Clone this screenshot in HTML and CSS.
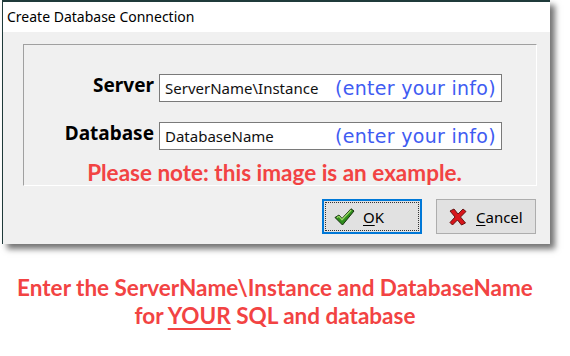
FILE: index.html
```html
<!DOCTYPE html>
<html>
<head>
<meta charset="utf-8">
<link rel="stylesheet" href="styles.css">
</head>
<body>
<div class="window">
  <div class="titlebar">Create Database Connection</div>
  <div class="client">
    <div class="group">
      <div class="form">
        <label class="label">Server</label>
        <div class="input"><span class="val">ServerName\Instance</span><span class="hint">(enter your info)</span></div>
        <label class="label">Database</label>
        <div class="input"><span class="val">DatabaseName</span><span class="hint">(enter your info)</span></div>
      </div>
      <div class="note">Please note: this image is an example.</div>
    </div>
    <div class="buttons">
      <button class="btn btn-default"><span class="focus">
        <svg class="ico" width="21" height="18" viewBox="0 0 21 18"><path d="M1 9.5 L5 7 L8 10.5 L17 0.8 L20 3 L8.5 17 Z" fill="#2e8c1c" stroke="#16300e" stroke-width="1"/><path d="M2.8 9.6 L5 8.3 L8 11.8 L17.2 2" fill="none" stroke="#9ad766" stroke-width="1.3"/></svg>
        <span class="cap"><u>O</u>K</span></span></button>
      <button class="btn"><span class="nofocus">
        <svg class="ico" width="20" height="18" viewBox="0 0 20 18"><path d="M2 3 L6 1 L10 6 L15 1 L18 3.5 L12.5 9 L17.5 15 L13.5 17 L9.5 12 L4.5 17 L2 14.5 L7 9 Z" fill="#d8141a" stroke="#5a0a0a" stroke-width="0.9"/></svg>
        <span class="cap"><u>C</u>ancel</span></span></button>
    </div>
  </div>
</div>
<div class="caption">
  <p class="line">Enter the ServerName\Instance and DatabaseName</p>
  <p class="line">for <span class="ul">YOUR</span> SQL and database</p>
</div>
</body>
</html>
```

FILE: styles.css
```css
html, body {
  margin: 0;
  padding: 0;
  background: #ffffff;
}
body {
  width: 570px;
  height: 356px;
  overflow: hidden;
  font-family: "Noto Sans", sans-serif;
}
.window {
  margin-left: 2px;
  width: 547px;
  border-left: 1px solid #1f3a3a;
  border-top: 2px solid #1f3a3a;
  background: #f0f0f0;
  box-shadow: 5px 5px 6px rgba(0, 0, 0, 0.55);
}
.titlebar {
  height: 30px;
  background: #ffffff;
  padding-left: 4px;
  font-size: 14px;
  line-height: 30px;
  color: #000;
}
.client {
  padding: 12px 12px 10px 20px;
}
.group {
  width: 514px;
  height: 142px;
  box-sizing: border-box;
  border-top: 1px solid #a0a0a0;
  border-left: 1px solid #a0a0a0;
  border-right: 1px solid #ffffff;
  border-bottom: 1px solid #ffffff;
  padding-top: 29px;
}
.form {
  display: grid;
  grid-template-columns: 130px 343px;
  column-gap: 5px;
  row-gap: 20px;
  align-items: center;
}
.label {
  text-align: right;
  font-weight: 700;
  font-size: 19px;
  color: #000;
  line-height: 24px;
  margin-top: -6px;
}
.input {
  height: 28px;
  box-sizing: border-box;
  background: #fff;
  border: 1px solid #7a7a7a;
  display: flex;
  justify-content: space-between;
  align-items: center;
  padding: 0 5px 0 5px;
}
.val {
  font-size: 15px;
  color: #111;
}
.hint {
  font-family: "DejaVu Sans", sans-serif;
  font-size: 19px;
  letter-spacing: 0.3px;
  color: #3f5cf2;
}
.note {
  margin-top: 10px;
  padding-right: 11px;
  text-align: center;
  font-family: Lato, sans-serif;
  font-weight: 700;
  font-size: 22.5px;
  line-height: 26px;
  color: #f24343;
}
.buttons {
  display: flex;
  justify-content: flex-end;
  gap: 14px;
  margin-top: 13px;
  padding-right: 2px;
}
.btn {
  width: 100px;
  height: 35px;
  box-sizing: border-box;
  background: #e1e1e1;
  border: 1px solid #adadad;
  padding: 2px;
  margin: 0;
  font-family: "Noto Sans", sans-serif;
  font-size: 15px;
  color: #000;
  display: flex;
}
.btn-default {
  border: 2px solid #0078d7;
  padding: 1px;
}
.focus, .nofocus {
  flex: 1;
  display: flex;
  align-items: center;
  gap: 8px;
  padding-left: 8px;
  border: 1px dotted transparent;
}
.focus {
  border-color: #333;
}
.ico {
  display: block;
}
.cap u {
  text-underline-offset: 2px;
}
.caption {
  width: 550px;
  margin-top: 30px;
  text-align: center;
  font-family: Lato, sans-serif;
  font-weight: 700;
  font-size: 22.5px;
  color: #f24343;
}
.line {
  margin: 0;
  line-height: 28px;
}
.ul {
  text-decoration: underline;
  text-decoration-thickness: 2px;
  text-underline-offset: 4px;
}
```
